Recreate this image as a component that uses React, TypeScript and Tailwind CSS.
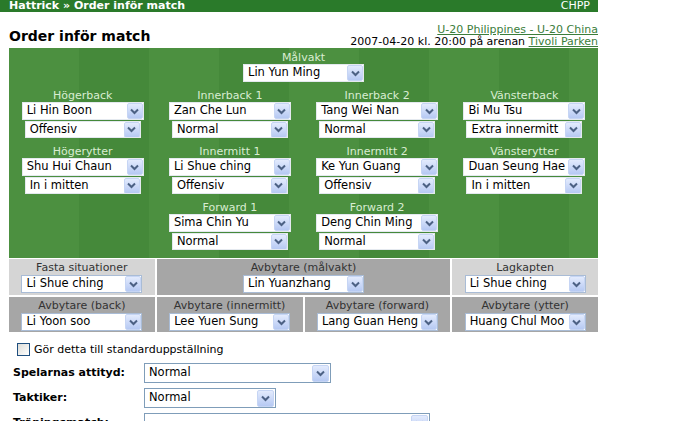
import React from 'react'

const FONT = "font-['DejaVu_Sans',Verdana,sans-serif]"

function Chevron({ big = false }: { big?: boolean }) {
  return (
    <div
      className={`flex shrink-0 items-center justify-center rounded-[2px] border border-[#c6d5f4] bg-[linear-gradient(#e3ebfd,#b6c9f3)] ${
        big ? 'h-[17px] w-[17px] mr-[1px]' : 'h-[16px] w-[16px] mr-[0px]'
      }`}
    >
      <svg width="9" height="7" viewBox="0 0 9 7">
        <path d="M1 1.5 L4.5 5 L8 1.5" fill="none" stroke="#4c6184" strokeWidth="2" />
      </svg>
    </div>
  )
}

function Sel({ value, cls, big = false }: { value: string; cls: string; big?: boolean }) {
  return (
    <div className={`flex items-center justify-between overflow-hidden bg-white border ${cls}`}>
      <span className="whitespace-nowrap pl-[4px] text-[11.5px] leading-none text-black">{value}</span>
      <Chevron big={big} />
    </div>
  )
}

function Position({ label, player, order }: { label: string; player: string; order: string }) {
  return (
    <div className="flex flex-col items-center">
      <div className="h-[13px] text-[11px] leading-[13px] text-[#d9edd2]">{label}</div>
      <Sel value={player} cls="h-[18px] w-[122px] border-[#e4e9ef]" />
      <div className="mt-[1px]">
        <Sel value={order} cls="h-[17px] w-[116px] border-[#e4e9ef]" />
      </div>
    </div>
  )
}

function Box({ label, value, light = false, span = false }: { label: string; value: string; light?: boolean; span?: boolean }) {
  return (
    <div
      className={`flex flex-col items-center pt-[2px] ${light ? 'bg-[#d5d5d5]' : 'bg-[#a6a6a6]'} ${span ? 'col-span-2' : ''}`}
    >
      <div className="h-[13px] text-[11px] leading-[13px] text-[#333]">{label}</div>
      <div className="mt-[1px]">
        <Sel value={value} cls="h-[18px] w-[121px] border-[#a9bcd6]" />
      </div>
    </div>
  )
}

function FormRow({ label, value, cls }: { label: string; value: string; cls: string }) {
  return (
    <div className="flex items-center">
      <div className="w-[131px] text-[11px] font-bold text-black">{label}</div>
      <Sel value={value} cls={cls} big />
    </div>
  )
}

export default function App() {
  return (
    <div className={`h-[421px] w-[680px] overflow-hidden bg-white ${FONT}`}>
      {/* top bar */}
      <div className="flex h-[12px] w-[598px] items-center justify-between bg-[#2a7a2a] pl-[9px] pr-[8px] text-[11px] leading-[12px] text-white">
        <span className="font-bold">Hattrick » Order inför match</span>
        <span>CHPP</span>
      </div>

      <div className="ml-[9px] w-[589px]">
        {/* title row */}
        <div className="flex h-[36px] items-end justify-between">
          <h1 className="mb-[4px] text-[14px] font-bold leading-[16px] text-black">Order inför match</h1>
          <div className="text-right text-[11px] leading-[12px] text-black">
            <div>
              <span className="text-[#3b7d3b] underline">U-20 Philippines - U-20 China</span>
            </div>
            <div>
              2007-04-20 kl. 20:00 på arenan <span className="text-[#3b7d3b] underline">Tivoli Parken</span>
            </div>
          </div>
        </div>

        {/* pitch */}
        <div className="h-[210px] bg-[repeating-linear-gradient(90deg,#4c9040_0px,#4c9040_70px,#45893a_70px,#45893a_140px)] pt-[3px]">
          <div className="flex flex-col items-center">
            <div className="h-[13px] text-[11px] leading-[13px] text-[#d9edd2]">Målvakt</div>
            <Sel value="Lin Yun Ming" cls="h-[18px] w-[121px] border-[#e4e9ef]" />
          </div>
          <div className="mt-[7px] grid grid-cols-4 gap-y-[7px]">
            <Position label="Högerback" player="Li Hin Boon" order="Offensiv" />
            <Position label="Innerback 1" player="Zan Che Lun" order="Normal" />
            <Position label="Innerback 2" player="Tang Wei Nan" order="Normal" />
            <Position label="Vänsterback" player="Bi Mu Tsu" order="Extra innermitt" />
            <Position label="Högerytter" player="Shu Hui Chaun" order="In i mitten" />
            <Position label="Innermitt 1" player="Li Shue ching" order="Offensiv" />
            <Position label="Innermitt 2" player="Ke Yun Guang" order="Offensiv" />
            <Position label="Vänsterytter" player="Duan Seung Hae" order="In i mitten" />
            <div />
            <Position label="Forward 1" player="Sima Chin Yu" order="Normal" />
            <Position label="Forward 2" player="Deng Chin Ming" order="Normal" />
            <div />
          </div>
        </div>

        {/* substitutes */}
        <div className="mt-[1px] grid grid-cols-4 grid-rows-[36px_35px] gap-[2px]">
          <Box label="Fasta situationer" value="Li Shue ching" light />
          <Box label="Avbytare (målvakt)" value="Lin Yuanzhang" span />
          <Box label="Lagkapten" value="Li Shue ching" light />
          <Box label="Avbytare (back)" value="Li Yoon soo" />
          <Box label="Avbytare (innermitt)" value="Lee Yuen Sung" />
          <Box label="Avbytare (forward)" value="Lang Guan Heng" />
          <Box label="Avbytare (ytter)" value="Huang Chul Moo" />
        </div>

        {/* default checkbox */}
        <div className="ml-[8px] mt-[11px] flex items-center gap-[4px]">
          <div className="h-[13px] w-[13px] border border-[#1f4f7f] bg-[linear-gradient(135deg,#dcdcd7,#ffffff)]" />
          <span className="text-[11px] leading-[13px] text-black">Gör detta till standarduppställning</span>
        </div>

        {/* team settings */}
        <div className="ml-[4px] mt-[7px] flex flex-col gap-[5px]">
          <FormRow label="Spelarnas attityd:" value="Normal" cls="h-[20px] w-[187px] border-[#7f9db9]" />
          <FormRow label="Taktiker:" value="Normal" cls="h-[20px] w-[132px] border-[#7f9db9]" />
          <FormRow label="Träningsmatch:" value="" cls="h-[20px] w-[286px] border-[#7f9db9]" />
        </div>
      </div>
    </div>
  )
}
